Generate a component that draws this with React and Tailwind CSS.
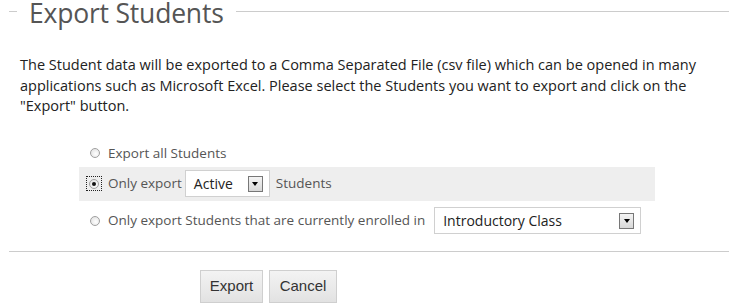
import React from "react";

function Radio({ checked, focused }) {
  return (
    <span className={"inline-flex items-center justify-center w-[14px] h-[13px] " + (focused ? "outline outline-1 outline-dotted outline-[#222]" : "")}>
      <span className="relative w-[10px] h-[10px] rounded-full border border-[#a0a0a0] bg-[radial-gradient(circle_at_60%_60%,#ffffff,#dcdcdc)] flex items-center justify-center">
        {checked && <span className="w-[4px] h-[4px] rounded-full bg-[#111]" />}
      </span>
    </span>
  );
}

function Select({ value, w }) {
  return (
    <span className={"inline-flex items-center justify-between h-[27px] border border-[#d0d0d0] bg-white pl-[8px] pr-[6px] text-[14px] text-[#222] " + w}>
      <span>{value}</span>
      <span className="w-[15px] h-[16px] border border-[#777] bg-[linear-gradient(#f4f4f4,#d8d8d8)] flex items-center justify-center">
        <span className="w-0 h-0 border-l-[3.5px] border-r-[3.5px] border-t-[4px] border-l-transparent border-r-transparent border-t-black" />
      </span>
    </span>
  );
}

export default function App() {
  const font = "font-['Open_Sans','DejaVu_Sans',sans-serif]";
  return (
    <div className={"w-[738px] h-[307px] bg-white overflow-hidden " + font}>
      <div className="flex items-start h-[23px] pl-[9px] pr-[9px]">
        <div className="w-[8px] mt-[11px] border-t border-[#cccccc]" />
        <div className="px-[12px] text-[26.5px] leading-[27px] text-[#555] tracking-[-0.2px]">Export Students</div>
        <div className="flex-1 mt-[11px] border-t border-[#cccccc]" />
      </div>
      <p className="mt-[32px] pl-[20px] text-[14.5px] leading-[20.5px] text-[#222]">
        The Student data will be exported to a Comma Separated File (csv file) which can be opened in many
        <br />
        applications such as Microsoft Excel. Please select the Students you want to export and click on the
        <br />
        "Export" button.
      </p>
      <div className="ml-[79px] w-[576px] mt-[23px] text-[13.5px] text-[#555]">
        <div className="flex items-center h-[27px] pl-[9px]">
          <Radio />
          <span className="ml-[6px]">Export all Students</span>
        </div>
        <div className="flex items-center h-[34px] bg-[#eeeeee] pl-[8px]">
          <Radio checked focused />
          <span className="ml-[7px]">Only export</span>
          <span className="ml-[3px] flex"><Select value="Active" w="w-[85px]" /></span>
          <span className="ml-[6px]">Students</span>
        </div>
        <div className="flex items-center h-[40px] pl-[9px]">
          <Radio />
          <span className="ml-[6px]">Only export Students that are currently enrolled in</span>
          <span className="ml-[9px] flex"><Select value="Introductory Class" w="w-[207px]" /></span>
        </div>
      </div>
      <div className="mx-[9px] mt-[10px] border-t border-[#cccccc]" />
      <div className="flex gap-[6px] pl-[200px] mt-[18px] font-['Liberation_Sans',Arial,sans-serif]">
        <button className="w-[63px] h-[33px] border border-[#cfcfcf] bg-[linear-gradient(#f3f3f3,#e2e2e2)] text-[15px] text-[#333]">Export</button>
        <button className="w-[68px] h-[33px] border border-[#cfcfcf] bg-[linear-gradient(#f3f3f3,#e2e2e2)] text-[15px] text-[#333]">Cancel</button>
      </div>
    </div>
  );
}
